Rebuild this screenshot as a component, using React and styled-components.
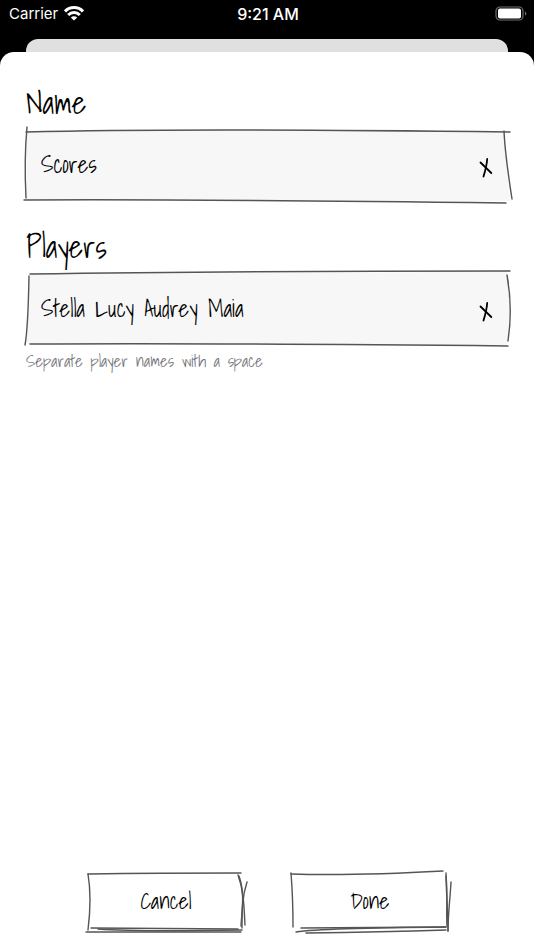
import { useState } from "react";
import styled, { createGlobalStyle } from "styled-components";

const GlobalStyle = createGlobalStyle`
  * {
    box-sizing: border-box;
  }

  body {
    margin: 0;
    background: #000;
  }
`;

const handwriting = `"Shadows Into Light", "Liberation Sans Narrow", "DejaVu Sans Condensed", sans-serif`;

const Screen = styled.div`
  display: flex;
  flex-direction: column;
  min-height: 100vh;
  color: #000;
  font-family: ${handwriting};
`;

const StatusBar = styled.header`
  display: grid;
  grid-template-columns: 1fr auto 1fr;
  align-items: center;
  height: 27px;
  margin-bottom: 12px;
  padding: 0 7px 0 9px;
  color: #fff;
  font-family: Inter, "Liberation Sans", sans-serif;
  font-size: 15px;
`;

const Carrier = styled.div`
  display: flex;
  align-items: center;
  gap: 6px;
`;

const Time = styled.time`
  font-size: 16px;
  font-weight: 500;
`;

const Battery = styled.svg`
  justify-self: end;
`;

const CardBehind = styled.div`
  height: 13px;
  margin: 0 26px;
  border-radius: 12px 12px 0 0;
  background: #e0e0e0;
`;

const Sheet = styled.form`
  display: flex;
  flex: 1;
  flex-direction: column;
  padding: 32px 26px 21px;
  border-radius: 14px 14px 0 0;
  background: #fff;
`;

const Field = styled.div`
  margin-bottom: 26px;
`;

const Label = styled.label`
  display: block;
  margin-bottom: 8px;
  font-size: 31px;
  line-height: 38px;
`;

const InputBox = styled.div`
  position: relative;
  display: flex;
  align-items: center;
  height: 72px;
  padding: 0 7px 0 15px;
`;

const Sketch = styled.svg`
  position: absolute;
  inset: 0;
  width: 100%;
  height: 100%;
  overflow: visible;
  pointer-events: none;
  fill: none;
  stroke: #555;
  stroke-width: 1.4;
  stroke-linecap: round;

  path {
    vector-effect: non-scaling-stroke;
  }

  .fill {
    fill: #f7f7f7;
    stroke: none;
  }
`;

const TextInput = styled.input`
  position: relative;
  flex: 1;
  min-width: 0;
  padding: 0 0 3px;
  border: 0;
  outline: 0;
  background: transparent;
  color: #000;
  font-family: inherit;
  font-size: 23px;
  line-height: 32px;
`;

const ClearButton = styled.button`
  position: relative;
  display: flex;
  padding: 10px 8px 6px;
  border: 0;
  background: transparent;
  cursor: pointer;
`;

const Hint = styled.p`
  margin: 3px 0 0;
  color: #77777c;
  font-size: 17px;
  line-height: 24px;
`;

const Actions = styled.div`
  display: flex;
  justify-content: center;
  gap: 48px;
  margin-top: auto;
  padding-left: 2px;
`;

const SketchButton = styled.button`
  position: relative;
  width: 156px;
  height: 56px;
  padding: 0;
  border: 0;
  background: transparent;
  color: #000;
  font-family: inherit;
  font-size: 22px;
  line-height: 32px;
  cursor: pointer;
`;

function WifiIcon() {
  return (
    <svg width="20" height="15" viewBox="0 0 20 15" fill="none" stroke="#fff" strokeWidth="3" aria-hidden="true">
      <path d="M1 5.4C6 .3 14 .3 19 5.4" />
      <path d="M4.2 9C7.5 5.7 12.5 5.7 15.8 9" />
      <path d="M10 14.6 6.8 11.4C8.6 9.8 11.4 9.8 13.2 11.4Z" fill="#fff" stroke="none" />
    </svg>
  );
}

function BatteryIcon() {
  return (
    <Battery width="32" height="15" viewBox="0 0 32 15" aria-hidden="true">
      <rect x="1" y="1" width="27" height="13" rx="4" fill="none" stroke="#6e6e6e" strokeWidth="1.2" />
      <rect x="3" y="2.5" width="23" height="10" rx="2" fill="#fff" />
      <path d="M30 5.5c1.8.7 1.8 3.3 0 4z" fill="#777" />
    </Battery>
  );
}

function CrossIcon() {
  return (
    <svg width="14" height="20" viewBox="0 0 14 20" fill="none" stroke="#000" strokeWidth="1.8" strokeLinecap="round" aria-hidden="true">
      <path d="M1.5 4.5 12.3 15" />
      <path d="M8.2 1Q7.7 8 4.5 18.6" />
    </svg>
  );
}

const nameLines = {
  fill: "M1 2Q150-2 478 2Q480 30 484 71L0 69Z",
  lines: ["M0 2Q150-2 484 2", "M1-3Q-2 30 0 68", "M-2 70Q150 69 480 73", "M478 1Q479 24 486 69"],
};

const playerLines = {
  fill: "M4 0Q200-1 481-2Q487 34 481 71L1 70Q2 35 4 0Z",
  lines: ["M4 0Q200-3 484-3", "M3 2Q2 55-1 71", "M4 70Q200 69 482 72", "M481 1Q487 34 482 67"],
};

const cancelLines = [
  "M0 1Q70 0 153 0",
  "M0 1Q4 25 0 57",
  "M3 55 150 56",
  "M-2 59 153 59",
  "M10 56Q50 59 154 57",
  "M150 2C156 18 156 35 157 52",
  "M159 9C154 24 154 38 154 55",
  "M151 3C157 20 154 36 153 53",
];

const doneLines = [
  "M-1 1Q60 3 151-2",
  "M-1 0Q1 25 1 54",
  "M9 55 154 54",
  "M4 59Q30 55 154 54",
  "M14 60Q90 59 154 57",
  "M154 0C154 18 156 36 156 58",
  "M159 9C158 28 156 40 156 58",
  "M154 3C156 20 154 36 155 53",
];

function SketchField({ id, label, value, onChange, shape, hint }) {
  return (
    <Field>
      <Label htmlFor={id}>{label}</Label>
      <InputBox>
        <Sketch viewBox="0 0 482 72" preserveAspectRatio="none" aria-hidden="true">
          <path className="fill" d={shape.fill} />
          {shape.lines.map((d) => <path key={d} d={d} />)}
        </Sketch>
        <TextInput id={id} type="text" value={value} onChange={(e) => onChange(e.target.value)} />
        <ClearButton type="button" aria-label={`Clear ${label}`} onClick={() => onChange("")}>
          <CrossIcon />
        </ClearButton>
      </InputBox>
      {hint && <Hint>{hint}</Hint>}
    </Field>
  );
}

function ActionButton({ lines, children, ...props }) {
  return (
    <SketchButton {...props}>
      <Sketch viewBox="0 0 156 56" preserveAspectRatio="none" aria-hidden="true">
        {lines.map((d) => <path key={d} d={d} />)}
      </Sketch>
      {children}
    </SketchButton>
  );
}

function App() {
  const [name, setName] = useState("Scores");
  const [players, setPlayers] = useState("Stella Lucy Audrey Maia");

  return (
    <Screen>
      <GlobalStyle />
      <StatusBar>
        <Carrier>Carrier <WifiIcon /></Carrier>
        <Time>9:21 AM</Time>
        <BatteryIcon />
      </StatusBar>
      <CardBehind />
      <Sheet onSubmit={(e) => e.preventDefault()}>
        <SketchField id="name" label="Name" value={name} onChange={setName} shape={nameLines} />
        <SketchField
          id="players"
          label="Players"
          value={players}
          onChange={setPlayers}
          shape={playerLines}
          hint="Separate player names with a space"
        />
        <Actions>
          <ActionButton type="button" lines={cancelLines}>Cancel</ActionButton>
          <ActionButton type="submit" lines={doneLines}>Done</ActionButton>
        </Actions>
      </Sheet>
    </Screen>
  );
}

export default App;
